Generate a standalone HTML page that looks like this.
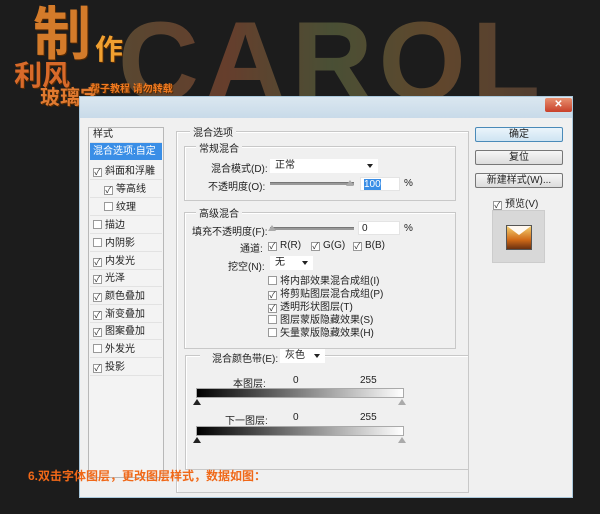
<!DOCTYPE html>
<html><head><meta charset="utf-8"><style>
*{margin:0;padding:0;box-sizing:border-box}
body{width:600px;height:514px;overflow:hidden;background:#1c1c1c;position:relative;font-family:"Liberation Sans","Noto Sans CJK SC",sans-serif;font-size:10px;color:#222}
.a{position:absolute}
.big{font-family:"Liberation Sans",sans-serif;font-weight:bold;font-size:112px;line-height:1;letter-spacing:6px;top:6px;left:118px;opacity:.55;background:linear-gradient(90deg,#8a6d44,#a35a3a,#6f7a4a,#9a6a3a,#7d5a44);-webkit-background-clip:text;background-clip:text;-webkit-text-fill-color:transparent}
.lg{font-weight:bold;color:#e8862c;font-family:"Liberation Sans","Noto Sans CJK SC",sans-serif;text-shadow:1px 1px 0 #5a2a00}
.box{position:absolute;border:1px solid #c8c8c8;box-shadow:inset 1px 1px 0 #fff}
.lab{position:absolute;background:#f0f0f0;padding:0 3px;font-size:10px}
.cb{display:inline-block;width:9px;height:9px;border:1px solid #999;background:#fff;vertical-align:-1px;margin-right:3px;font-size:9px;line-height:7px;text-align:center;color:#333}
.li{position:absolute;left:90px;width:72px;height:17px;border-bottom:1px solid #e2e2e2;padding-left:3px;line-height:17px;font-size:10px}
.btn{position:absolute;left:475px;width:88px;height:15px;border:1px solid #777;border-radius:2px;background:linear-gradient(#f6f6f6,#dcdcdc);text-align:center;font-size:10px;line-height:13px}
.dd{position:absolute;background:#fff;height:14px;line-height:14px;padding-left:5px;font-size:10px}
.dd:after{content:"";position:absolute;right:5px;top:5px;border:3px solid transparent;border-top:4px solid #222}
.sl{position:absolute;height:3px;background:#999;border-top:1px solid #777}
.in{position:absolute;background:#fff;height:14px;line-height:14px;padding-left:3px;border:1px solid #e4e4e4}
.ck{position:absolute;left:268px;font-size:10px;line-height:12px}
.gr{position:absolute;left:196px;width:208px;height:10px;background:linear-gradient(90deg,#000,#fff);border:1px solid #aaa}
.tri{position:absolute;width:0;height:0;border:4px solid transparent;border-bottom:6px solid #222;border-top:0}
.tri2{position:absolute;width:0;height:0;border:4px solid transparent;border-bottom:6px solid #aaa;border-top:0}
</style></head><body>
<div class="a big">CAROL</div>
<div class="a lg" style="left:33px;top:6px;font-size:58px;line-height:1;opacity:.9">制</div>
<div class="a lg" style="left:95px;top:36px;font-size:28px;line-height:1;color:#f0a030">作</div>
<div class="a lg" style="left:14px;top:62px;font-size:28px;line-height:1;color:#d86a2a">利风</div>
<div class="a lg" style="left:40px;top:88px;font-size:20px;line-height:1;color:#e07a30">玻璃字</div>
<div class="a lg" style="left:90px;top:80px;font-size:10px;color:#f07a20">帮子教程 请勿转载</div>

<div class="a" style="left:79px;top:96px;width:494px;height:402px;background:#f0f0f0;border:1px solid #aac8dc"></div>
<div class="a" style="left:80px;top:97px;width:492px;height:21px;background:linear-gradient(#d8e6f0,#c4d8e8);opacity:.9"></div>
<div class="a" style="left:545px;top:98px;width:27px;height:14px;background:linear-gradient(#e89070,#c8402a);border-radius:2px;color:#fff;font-size:10px;text-align:center;line-height:14px;font-weight:bold">✕</div>

<div class="a" style="left:88px;top:127px;width:76px;height:351px;border:1px solid #b8b8b8;background:#f3f3f3"></div>
<div class="li" style="top:126px">样式</div>
<div class="li" style="top:143px;background:#3a8ee6;color:#fff;border:none">混合选项:自定</div>
<div class="li" style="top:163px"><span class="cb">✓</span>斜面和浮雕</div>
<div class="li" style="top:181px;padding-left:14px"><span class="cb">✓</span>等高线</div>
<div class="li" style="top:199px;padding-left:14px"><span class="cb"></span>纹理</div>
<div class="li" style="top:217px"><span class="cb"></span>描边</div>
<div class="li" style="top:235px"><span class="cb"></span>内阴影</div>
<div class="li" style="top:253px"><span class="cb">✓</span>内发光</div>
<div class="li" style="top:270px"><span class="cb">✓</span>光泽</div>
<div class="li" style="top:288px"><span class="cb">✓</span>颜色叠加</div>
<div class="li" style="top:306px"><span class="cb">✓</span>渐变叠加</div>
<div class="li" style="top:323px"><span class="cb">✓</span>图案叠加</div>
<div class="li" style="top:341px"><span class="cb"></span>外发光</div>
<div class="li" style="top:359px"><span class="cb">✓</span>投影</div>

<div class="box" style="left:176px;top:131px;width:293px;height:362px"></div>
<div class="lab" style="left:190px;top:124px">混合选项</div>
<div class="box" style="left:184px;top:146px;width:272px;height:55px"></div>
<div class="lab" style="left:196px;top:140px">常规混合</div>
<div class="a" style="left:211px;top:160px">混合模式(D):</div>
<div class="dd" style="left:270px;top:159px;width:108px">正常</div>
<div class="a" style="left:208px;top:178px">不透明度(O):</div>
<div class="sl" style="left:270px;top:182px;width:84px"></div>
<div class="tri2" style="left:346px;top:180px"></div>
<div class="in" style="left:360px;top:177px;width:40px"><span style="background:#3a8ee6;color:#fff">100</span></div>
<div class="a" style="left:404px;top:178px">%</div>

<div class="box" style="left:184px;top:212px;width:272px;height:137px"></div>
<div class="lab" style="left:196px;top:205px">高级混合</div>
<div class="a" style="left:192px;top:223px">填充不透明度(F):</div>
<div class="sl" style="left:270px;top:227px;width:84px"></div>
<div class="tri2" style="left:268px;top:225px"></div>
<div class="in" style="left:358px;top:221px;width:42px">0</div>
<div class="a" style="left:404px;top:223px">%</div>
<div class="a" style="left:240px;top:240px">通道:</div>
<div class="a" style="left:268px;top:240px"><span class="cb">✓</span>R(R)</div>
<div class="a" style="left:311px;top:240px"><span class="cb">✓</span>G(G)</div>
<div class="a" style="left:353px;top:240px"><span class="cb">✓</span>B(B)</div>
<div class="a" style="left:228px;top:258px">挖空(N):</div>
<div class="dd" style="left:270px;top:256px;width:43px">无</div>
<div class="ck" style="top:276px"><span class="cb"></span>将内部效果混合成组(I)</div>
<div class="ck" style="top:289px"><span class="cb">✓</span>将剪贴图层混合成组(P)</div>
<div class="ck" style="top:302px"><span class="cb">✓</span>透明形状图层(T)</div>
<div class="ck" style="top:315px"><span class="cb"></span>图层蒙版隐藏效果(S)</div>
<div class="ck" style="top:328px"><span class="cb"></span>矢量蒙版隐藏效果(H)</div>

<div class="box" style="left:185px;top:355px;width:284px;height:115px"></div>
<div class="lab" style="left:200px;top:350px;width:85px;padding-left:12px">混合颜色带(E):</div>
<div class="dd" style="left:280px;top:349px;width:45px">灰色</div>
<div class="a" style="left:233px;top:375px">本图层:</div>
<div class="a" style="left:293px;top:375px">0</div>
<div class="a" style="left:360px;top:375px">255</div>
<div class="gr" style="top:388px"></div>
<div class="tri" style="left:193px;top:399px"></div>
<div class="tri2" style="left:398px;top:399px"></div>
<div class="a" style="left:225px;top:412px">下一图层:</div>
<div class="a" style="left:293px;top:412px">0</div>
<div class="a" style="left:360px;top:412px">255</div>
<div class="gr" style="top:426px"></div>
<div class="tri" style="left:193px;top:437px"></div>
<div class="tri2" style="left:398px;top:437px"></div>

<div class="btn" style="top:127px;border-color:#4a8ab8;background:linear-gradient(#eaf4fb,#cfe4f2)">确定</div>
<div class="btn" style="top:150px">复位</div>
<div class="btn" style="top:173px">新建样式(W)...</div>
<div class="a" style="left:493px;top:195px"><span class="cb">✓</span>预览(V)</div>
<div class="a" style="left:492px;top:210px;width:53px;height:53px;background:#d8d8d8;border:1px solid #ccc"></div>
<div class="a" style="left:506px;top:225px;width:26px;height:25px;background:linear-gradient(#f4d070,#d06a18 60%,#6a3010);border:1px solid #555"></div>
<div class="a" style="left:507px;top:226px;width:0;height:0;border-left:12px solid transparent;border-right:12px solid transparent;border-top:9px solid #fff8f0"></div>

<div class="a lg" style="left:28px;top:467px;font-size:12px;color:#f06818;text-shadow:none">6.双击字体图层，更改图层样式，数据如图：</div>
</body></html>
